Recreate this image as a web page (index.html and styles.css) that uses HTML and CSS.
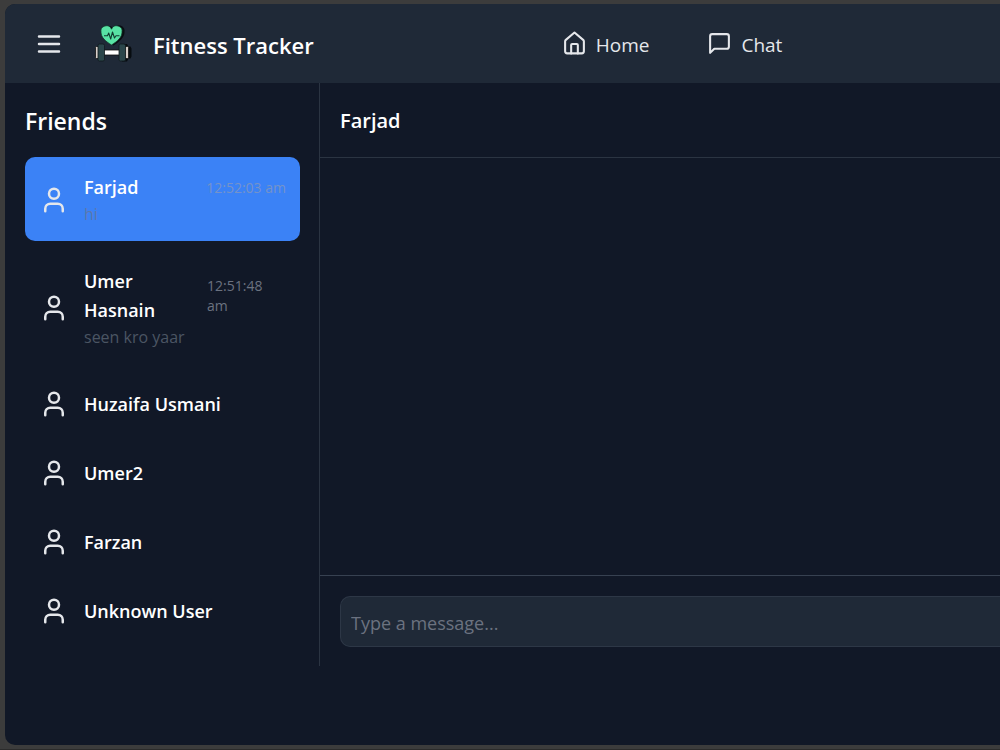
FILE: index.html
```html
<!DOCTYPE html>
<html lang="en">

<head>
  <meta charset="UTF-8" />
  <meta name="viewport" content="width=device-width, initial-scale=1.0" />
  <title>Fitness Tracker</title>
  <link rel="stylesheet" href="styles.css">
</head>

<body>
  <!-- Shared icons -->
  <svg class="icon-defs" aria-hidden="true">
    <symbol id="icon-user" viewBox="0 0 24 24">
      <path d="M19 21v-2a4 4 0 0 0-4-4H9a4 4 0 0 0-4 4v2" />
      <circle cx="12" cy="7" r="4" />
    </symbol>
  </svg>

  <div class="app">
    <header class="topbar">
      <button class="menu-btn" type="button" aria-label="Menu">
        <svg class="icon icon-lg" viewBox="0 0 24 24">
          <path d="M4 6h16M4 12h16M4 18h16" />
        </svg>
      </button>
      <a class="brand" href="#">
        <svg class="logo" viewBox="0 0 40 40" aria-hidden="true">
          <!-- heart -->
          <path d="M20.500 21.500C14 17 10 13 10 8.500a5.500 5.500 0 0 1 10.500-3A5.500 5.500 0 0 1 31.500 8.500C31.500 13 27 17.500 20.500 21.500z" fill="#090e12" />
          <path d="M18.500 21C12 17 8 13 8 8.300A5.500 5.500 0 0 1 18.500 5.200A5.500 5.500 0 0 1 29 8.300C29 13 25 17 18.500 21z" fill="#58e3a4" stroke="#15362c" stroke-width="0.800" />
          <path d="M11 11.800h3.500l1.200-2.800 2 6 1.800-7 2 6 1.500-2.200h3.500" fill="none" stroke="#123d30" stroke-width="1.100" stroke-linejoin="round" />
          <!-- dumbbell -->
          <path d="M29 20h5l1.500 2.500h2l1 2v8l-1 2h-2L34 37.500h-5z" fill="#070c10" />
          <rect x="10.500" y="26" width="16" height="5" fill="#fff" stroke="#111" stroke-width="0.800" />
          <rect x="2.500" y="22.500" width="3.500" height="12" rx="1" fill="#d8d0cb" stroke="#111" stroke-width="0.800" />
          <rect x="32" y="22.500" width="3.500" height="12" rx="1" fill="#d8d0cb" stroke="#111" stroke-width="0.800" />
          <rect x="5" y="20" width="6.500" height="17" rx="1.500" fill="#2b464b" stroke="#10191d" stroke-width="0.800" />
          <rect x="26" y="20" width="6.500" height="17" rx="1.500" fill="#2b464b" stroke="#10191d" stroke-width="0.800" />
        </svg>
        <span class="brand-name">Fitness Tracker</span>
      </a>
      <nav class="nav-links">
        <a href="#">
          <svg class="icon" viewBox="0 0 24 24">
            <path d="M3 10a2 2 0 0 1 .700-1.500L12 1.500l8.300 7A2 2 0 0 1 21 10v9.500a2 2 0 0 1-2 2H5a2 2 0 0 1-2-2z" />
            <path d="M8.800 21.500v-8a1 1 0 0 1 1-1h4.400a1 1 0 0 1 1 1v8" />
          </svg>
          <span>Home</span>
        </a>
        <a href="#">
          <svg class="icon" viewBox="0 0 24 24">
            <path d="M21 15a2 2 0 0 1-2 2H7l-4 4V5a2 2 0 0 1 2-2h14a2 2 0 0 1 2 2z" />
          </svg>
          <span>Chat</span>
        </a>
      </nav>
    </header>

    <div class="chat-layout">
      <!-- Friends -->
      <aside class="sidebar">
        <h2>Friends</h2>
        <ul class="friend-list">
          <li class="friend active">
            <svg class="icon icon-lg"><use href="#icon-user" /></svg>
            <div class="friend-info">
              <div class="friend-row">
                <span class="friend-name">Farjad</span>
                <span class="friend-time">12:52:03 am</span>
              </div>
              <p class="friend-message">hi</p>
            </div>
          </li>
          <li class="friend">
            <svg class="icon icon-lg"><use href="#icon-user" /></svg>
            <div class="friend-info">
              <div class="friend-row">
                <span class="friend-name">Umer Hasnain</span>
                <span class="friend-time">12:51:48 am</span>
              </div>
              <p class="friend-message">seen kro yaar</p>
            </div>
          </li>
          <li class="friend">
            <svg class="icon icon-lg"><use href="#icon-user" /></svg>
            <span class="friend-name">Huzaifa Usmani</span>
          </li>
          <li class="friend">
            <svg class="icon icon-lg"><use href="#icon-user" /></svg>
            <span class="friend-name">Umer2</span>
          </li>
          <li class="friend">
            <svg class="icon icon-lg"><use href="#icon-user" /></svg>
            <span class="friend-name">Farzan</span>
          </li>
          <li class="friend">
            <svg class="icon icon-lg"><use href="#icon-user" /></svg>
            <span class="friend-name">Unknown User</span>
          </li>
        </ul>
      </aside>

      <!-- Conversation -->
      <main class="chat">
        <div class="chat-header">
          <h2>Farjad</h2>
        </div>
        <div class="chat-messages"></div>
        <form class="chat-form">
          <input class="chat-input" type="text" placeholder="Type a message..." aria-label="Type a message">
        </form>
      </main>
    </div>
  </div>
</body>

</html>
```
FILE: styles.css
```css
* {
  box-sizing: border-box;
  margin: 0;
  padding: 0;
}

body {
  font-family: 'Segoe UI', 'Open Sans', 'Noto Sans', sans-serif;
  background-color: #3c3c3c;
  color: #fff;
  min-height: 100vh;
  display: flex;
  padding: 4px 0 4px 5px;
  border-bottom: 1px solid #2b2b2b;
}

.icon-defs {
  display: none;
}

.app {
  flex: 1;
  background-color: #111827;
  border-radius: 10px 0 0 10px;
  overflow: hidden;
}

.icon {
  width: 25px;
  height: 25px;
  flex-shrink: 0;
  fill: none;
  stroke: #e5e7eb;
  stroke-width: 2;
  stroke-linecap: round;
  stroke-linejoin: round;
}

.icon-lg {
  width: 30px;
  height: 30px;
}

/* Top bar */
.topbar {
  background-color: #1f2937;
  height: 79px;
  padding: 0 29px;
  display: flex;
  align-items: center;
}

.menu-btn {
  background: none;
  border: none;
  display: flex;
  cursor: pointer;
}

.brand {
  display: flex;
  align-items: center;
  gap: 20px;
  margin-left: 29px;
  color: #fff;
  text-decoration: none;
}

.logo {
  width: 40px;
  height: 40px;
}

.brand-name {
  padding-top: 2px;
  font-size: 22px;
  font-weight: 600;
  line-height: 34px;
}

.nav-links {
  display: flex;
  gap: 58px;
  margin-left: 248px;
}

.nav-links a {
  display: flex;
  align-items: center;
  gap: 9px;
  color: #e5e7eb;
  font-size: 19px;
  text-decoration: none;
}

.nav-links span {
  padding-top: 2px;
}

/* Layout */
.chat-layout {
  display: flex;
}

.sidebar {
  width: 315px;
  flex-shrink: 0;
  padding: 20px 19px 26px 20px;
  border-right: 1px solid #2b3442;
}

.sidebar h2 {
  font-size: 23px;
  font-weight: 600;
  line-height: 36px;
  margin-bottom: 18px;
}

.friend-list {
  list-style: none;
  display: flex;
  flex-direction: column;
  gap: 10px;
}

.friend {
  display: flex;
  align-items: center;
  gap: 15px;
  padding: 15px 14px 14px;
  border-radius: 10px;
  cursor: pointer;
}

.friend.active {
  background-color: #3b82f6;
}

.friend-info {
  flex: 1;
  padding-top: 1px;
}

.friend-row {
  display: flex;
  justify-content: space-between;
  align-items: center;
}

.friend-name {
  font-size: 18px;
  font-weight: 600;
  line-height: 29px;
}

.friend-time {
  color: #6b7280;
  font-size: 14px;
  line-height: 20px;
}

.friend.active .friend-time {
  color: #7593c9;
}

.friend-message {
  color: #4b5563;
  font-size: 16px;
  line-height: 25px;
}

.friend.active .friend-message {
  color: #5a78ad;
}

/* Conversation */
.chat {
  flex: 1;
  display: flex;
  flex-direction: column;
}

.chat-header {
  padding: 20px 20px 18px;
  border-bottom: 1px solid #2b3442;
}

.chat-header h2 {
  font-size: 20px;
  font-weight: 600;
  line-height: 36px;
}

.chat-messages {
  flex: 1;
}

.chat-form {
  display: flex;
  padding: 20px 0 19px 20px;
  border-top: 1px solid #374151;
}

.chat-input {
  flex: 1;
  height: 51px;
  padding: 2px 10px 0;
  background-color: #1f2937;
  border: 1px solid #2d3746;
  border-right: none;
  border-radius: 10px 0 0 10px;
  color: #fff;
  font-family: inherit;
  font-size: 18px;
}

.chat-input::placeholder {
  color: #6b7280;
}
```
